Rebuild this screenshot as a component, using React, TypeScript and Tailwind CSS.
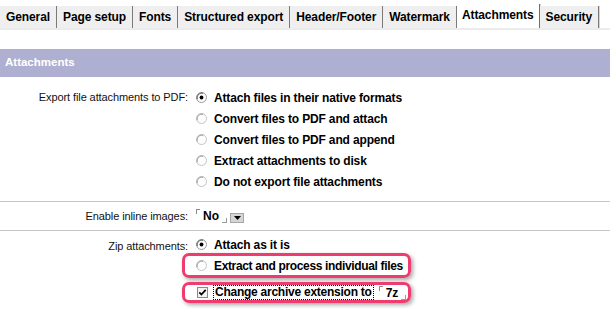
import React from "react";

const tabs = [
  "General",
  "Page setup",
  "Fonts",
  "Structured export",
  "Header/Footer",
  "Watermark",
  "Attachments",
  "Security",
];

const exportOptions = [
  "Attach files in their native formats",
  "Convert files to PDF and attach",
  "Convert files to PDF and append",
  "Extract attachments to disk",
  "Do not export file attachments",
];

function Radio({ checked }: { checked?: boolean }) {
  return (
    <svg width="11" height="11" viewBox="0 0 11 11" className="shrink-0">
      <circle cx="5.5" cy="5.5" r="5" fill="#fdfdfd" stroke={checked ? "#9a9a9a" : "#c4c4c4"} />
      <path d="M1.2 7.2 A5 5 0 0 1 7.2 1.2" fill="none" stroke={checked ? "#4a4a4a" : "#939393"} strokeWidth="1" />
      {checked && <circle cx="5.5" cy="5.5" r="1.9" fill="#000" />}
    </svg>
  );
}

function Checkbox() {
  return (
    <svg width="11" height="11" viewBox="0 0 11 11" className="shrink-0">
      <rect x="0.5" y="0.5" width="10" height="10" fill="#f4f4f4" stroke="#8a8a8a" />
      <path d="M2.3 5.4 L4.4 7.6 L8.7 2.9" fill="none" stroke="#000" strokeWidth="1.7" />
    </svg>
  );
}

function CornerTL() {
  return <span className="block w-[4px] h-[5px] border-l border-t border-[#8c8c8c]" />;
}

function CornerBR() {
  return <span className="block w-[5px] h-[5px] border-r border-b border-[#9c9c9c]" />;
}

function Option({ label, checked }: { label: string; checked?: boolean }) {
  return (
    <div className="flex items-center h-[21px]">
      <Radio checked={checked} />
      <span className="ml-[7px] whitespace-nowrap text-[12px] font-bold tracking-[-0.15px]">{label}</span>
    </div>
  );
}

function Label({ text }: { text: string }) {
  return (
    <div className="w-[188px] shrink-0 text-right text-[11px] tracking-[-0.1px] text-[#111]">{text}</div>
  );
}

export default function App() {
  return (
    <div className="w-[610px] h-[309px] bg-white overflow-hidden font-['Liberation_Sans',Arial,sans-serif] text-black">
      {/* tab strip */}
      <div className="flex items-end h-[28px]">
        {tabs.map((t) =>
          t === "Attachments" ? (
            <div
              key={t}
              className="h-[24px] bg-white px-[5px] pb-[3px] flex items-center border-r border-[#6f6f6f] shadow-[1px_0_0_#d6d6d6] text-[12px] font-bold tracking-[-0.1px]"
            >
              {t}
            </div>
          ) : (
            <div
              key={t}
              className="h-[22px] bg-[#efefef] px-[6px] flex items-center border-r border-[#7a7a7a] shadow-[1px_0_0_#d6d6d6] text-[12px] font-bold tracking-[-0.1px]"
            >
              {t}
            </div>
          )
        )}
      </div>
      <div className="h-[2px] bg-[#ebebeb]" />

      <div className="mt-[19px] h-[28px] bg-[#afafd1] flex items-center px-[5px] text-[11.5px] font-bold text-white">
        Attachments
      </div>

      {/* export options */}
      <div className="flex pt-[10px] pb-[9px]">
        <div className="pt-[2px]">
          <Label text="Export file attachments to PDF:" />
        </div>
        <div className="ml-[8px] flex flex-col">
          {exportOptions.map((o, i) => (
            <Option key={o} label={o} checked={i === 0} />
          ))}
        </div>
      </div>
      <div className="h-px bg-[#c6c6c6]" />

      {/* inline images */}
      <div className="flex items-center h-[28px]">
        <Label text="Enable inline images:" />
        <div className="ml-[8px] flex items-center">
          <div className="flex items-start h-[14px]">
            <CornerTL />
          </div>
          <span className="ml-[3px] text-[12px] font-bold">No</span>
          <div className="flex items-end h-[14px] ml-[3px]">
            <CornerBR />
          </div>
          <div className="ml-[3px] mt-[3px] w-[14px] h-[10px] bg-[#d6d6d6] border border-[#a6a6a6] flex items-center justify-center">
            <svg width="7" height="4" viewBox="0 0 7 4">
              <path d="M0 0 H7 L3.5 4 Z" fill="#000" />
            </svg>
          </div>
        </div>
      </div>
      <div className="h-px bg-[#c6c6c6]" />

      {/* zip attachments */}
      <div className="flex pt-[3px]">
        <div className="pt-[4px]">
          <Label text="Zip attachments:" />
        </div>
        <div className="ml-[8px] flex flex-col">
          <Option label="Attach as it is" checked />
          <div className="-mt-[2px] -ml-[14px] w-[229px] h-[25px] pl-[11px] border-[3px] border-[#ef3b6d] rounded-[7px] shadow-[2px_2px_4px_rgba(0,0,0,0.35)] flex items-center">
            <Radio />
            <span className="ml-[7px] whitespace-nowrap text-[12px] font-bold tracking-[-0.35px]">
              Extract and process individual files
            </span>
          </div>
          <div className="mt-[4px] -ml-[14px] w-[229px] h-[21px] pl-[12px] border-[3px] border-[#ef3b6d] rounded-[7px] shadow-[2px_2px_4px_rgba(0,0,0,0.35)] flex items-center">
            <Checkbox />
            <span className="ml-[5px] px-px whitespace-nowrap leading-[13px] border border-dotted border-black text-[12px] font-bold tracking-[-0.25px]">
              Change archive extension to
            </span>
            <div className="ml-[5px] flex items-start h-[14px]">
              <CornerTL />
            </div>
            <span className="ml-[3px] text-[12px] font-bold">7z</span>
            <div className="flex items-end h-[14px] ml-[3px]">
              <CornerBR />
            </div>
          </div>
        </div>
      </div>
    </div>
  );
}
